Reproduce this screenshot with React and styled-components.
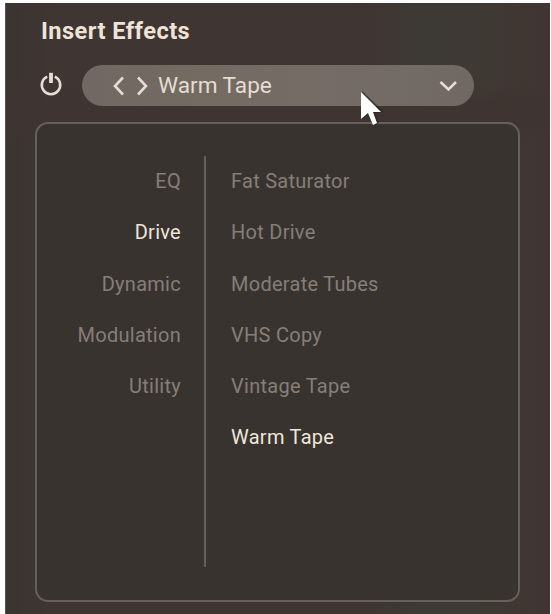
import React from "react";
import styled, { createGlobalStyle } from "styled-components";

const GlobalStyle = createGlobalStyle`
  * { box-sizing: border-box; }
  body { margin: 0; background: #fdfdfd; overflow: hidden; font-family: Roboto, sans-serif; }
`;

const Page = styled.div`
  height: 614px;
  padding: 3px 1px 0 5px;
`;

const Plugin = styled.main`
  position: relative;
  display: flex;
  flex-direction: column;
  height: 611px;
  padding: 11px 29px 12px 30px;
  border-left: 1px solid #555250;
  background:
    linear-gradient(180deg, transparent 0 78px, #3e3431 110px, transparent 140px),
    linear-gradient(90deg, #3a3532 0, #3f3532 45px, #3f3532 350px, #3d3934 410px, #3e3934 470px, #403532 540px);
`;

const Title = styled.h1`
  margin: 0 0 0 5px;
  height: 34px;
  font-size: 23.6px;
  font-weight: 700;
  line-height: 34px;
  letter-spacing: 0.45px;
  color: #eee3d7;
`;

const Toolbar = styled.div`
  display: flex;
  align-items: center;
  gap: 18px;
  height: 41px;
  margin: 17px 0 16px 4px;
`;

const PowerButton = styled.button`
  display: flex;
  flex: none;
  width: 24px;
  height: 24px;
  margin: 0 1px 3px -1px;
  padding: 0;
  border: 0;
  background: none;
  color: #e4dcd6;
`;

const PresetSelect = styled.div`
  display: flex;
  align-items: center;
  width: 392px;
  height: 41px;
  padding: 0 17px 0 29px;
  border-radius: 21px;
  background: linear-gradient(90deg, #706963, #736a61 25%, #756c66 60%, #706963);
  color: #e5ddd3;
`;

const PresetName = styled.span`
  flex: 1;
  margin-left: 9px;
  font-size: 22.6px;
  line-height: 40px;
`;

const Browser = styled.section`
  display: grid;
  grid-template-columns: 167px 2px 1fr;
  flex: none;
  width: 485px;
  height: 480px;
  padding: 32px 0 33px;
  margin-left: -1px;
  border: 2px solid #65605c;
  border-radius: 13px;
  background: #39332f;
`;

const Divider = styled.div`
  background: #65605c;
`;

const List = styled.ul`
  margin: 0;
  padding: ${({ $end }) => ($end ? "0 23px 0 0" : "0 0 0 25px")};
  list-style: none;
  text-align: ${({ $end }) => ($end ? "right" : "left")};
`;

const Item = styled.li`
  height: 51.3px;
  font-size: 20px;
  line-height: 50px;
  letter-spacing: 0.27px;
  white-space: nowrap;
  color: ${({ $active }) => ($active ? "#eee6dc" : "#857e79")};
`;

const Pointer = styled.svg`
  position: absolute;
  left: 352px;
  top: 86px;
`;

const categories = ["EQ", "Drive", "Dynamic", "Modulation", "Utility"];
const presets = ["Fat Saturator", "Hot Drive", "Moderate Tubes", "VHS Copy", "Vintage Tape", "Warm Tape"];

function PowerIcon() {
  return (
    <svg width="24" height="24" viewBox="0 0 24 24" fill="none" stroke="currentColor">
      <path d="M8.2 4.6a9.2 9.2 0 1 0 7.6 0" strokeWidth="2.6" />
      <path d="M12 .8v10.2" strokeWidth="3.8" />
    </svg>
  );
}

function Chevron({ width, height, points }) {
  return (
    <svg width={width} height={height} fill="none" stroke="currentColor" strokeWidth="2.6">
      <polyline points={points} />
    </svg>
  );
}

export default function App() {
  return (
    <Page>
      <GlobalStyle />
      <Plugin>
        <Title>Insert Effects</Title>
        <Toolbar>
          <PowerButton aria-label="Power"><PowerIcon /></PowerButton>
          <PresetSelect>
            <Chevron width="14" height="22" points="12,2.5 4,11 12,19.5" />
            <Chevron width="24" height="22" points="13,2.5 21,11 13,19.5" />
            <PresetName>Warm Tape</PresetName>
            <Chevron width="18" height="12" points="1.5,2 9.5,9.5 17,2" />
          </PresetSelect>
        </Toolbar>
        <Browser>
          <List $end>
            {categories.map((name) => <Item key={name} $active={name === "Drive"}>{name}</Item>)}
          </List>
          <Divider />
          <List>
            {presets.map((name) => <Item key={name} $active={name === "Warm Tape"}>{name}</Item>)}
          </List>
        </Browser>
        <Pointer width="30" height="40" viewBox="0 0 30 40">
          <path d="M4 2v28l7-5 5 11 5-2-4-10 9-1z" fill="#292421" opacity=".7" />
          <path d="M3 3v27l7-6 5 12 4-2-4-11h8z" fill="#fff" />
        </Pointer>
      </Plugin>
    </Page>
  );
}
